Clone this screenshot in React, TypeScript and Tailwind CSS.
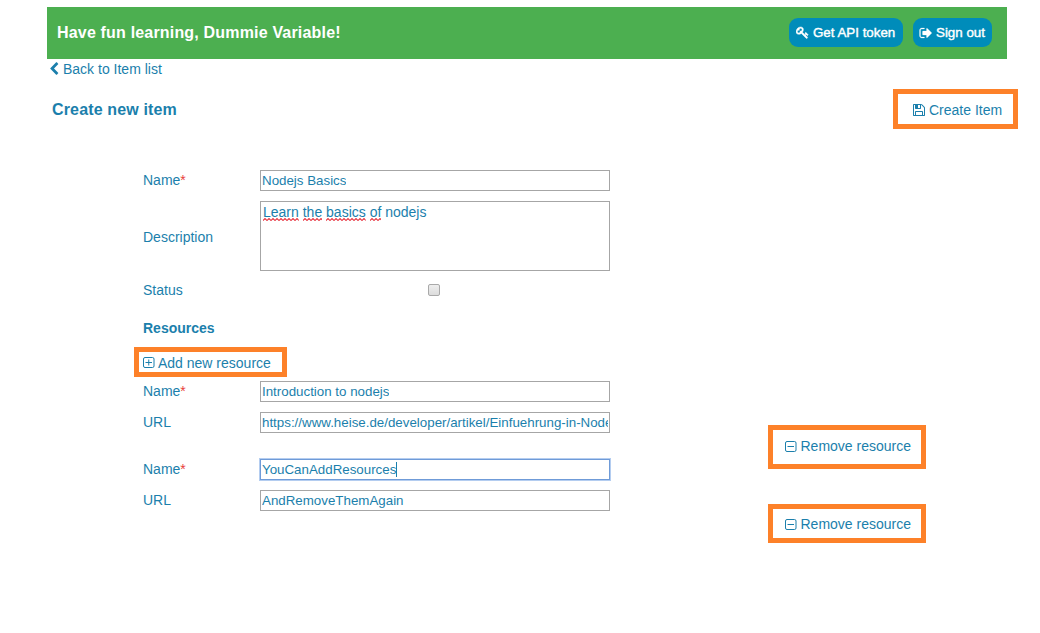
import type { ReactNode } from "react";

const ICONS = {
  key: "M832 512q0-80-56-136t-136-56-136 56-56 136q0 42 19 83-41-19-83-19-80 0-136 56t-56 136 56 136 136 56 136-56 56-136q0-42-19-83 41 19 83 19 80 0 136-56t56-136zm851 704q0 17-49 66t-66 49q-9 0-28.500-16t-36.500-33-38.500-40-24.500-26l-96 96 220 220q28 28 28 68 0 42-39 81t-81 39q-40 0-68-28l-671-671q-176 131-365 131-163 0-265.500-102.500t-102.500-265.500q0-160 95-313t248-248 313-95q163 0 265.500 102.500t102.500 265.500q0 189-131 365l355 355 96-96q-3-3-26-24.500t-40-38.500-33-36.500-16-28.500q0-17 49-66t66-49q13 0 23 10 6 6 46 44.500t82 79.500 86.500 86 73 78 28.500 41z",
  signOut:
    "M704 1440q0 4 1 20t.5 26.500-3 23.500-10 19.500-20.500 6.500h-320q-119 0-203.500-84.500t-84.500-203.500v-704q0-119 84.500-203.500t203.500-84.500h320q13 0 22.500 9.500t9.500 22.500q0 4 1 20t.5 26.500-3 23.500-10 19.500-20.500 6.500h-320q-66 0-113 47t-47 113v704q0 66 47 113t113 47h312l11.500 1 11.500 3 8 5.500 7 9 2 13.500zm928-544q0 26-19 45l-544 544q-19 19-45 19t-45-19-19-45v-288h-448q-26 0-45-19t-19-45v-384q0-26 19-45t45-19h448v-288q0-26 19-45t45-19 45 19l544 544q19 19 19 45z",
  save: "M512 1536h768v-384h-768v384zm896 0h128v-896q0-14-10-38.500t-20-34.500l-281-281q-10-10-34-20t-39-10v416q0 40-28 68t-68 28h-576q-40 0-68-28t-28-68v-416h-128v1280h128v-416q0-40 28-68t68-28h832q40 0 68 28t28 68v416zm-384-928v-320q0-13-9.500-22.500t-22.500-9.500h-192q-13 0-22.500 9.500t-9.500 22.500v320q0 13 9.500 22.500t22.500 9.500h192q13 0 22.500-9.500t9.500-22.500zm640 32v928q0 40-28 68t-68 28h-1344q-40 0-68-28t-28-68v-1344q0-40 28-68t68-28h928q40 0 88 20t76 48l280 280q28 28 48 76t20 88z",
  chevronLeft:
    "M1427 301l-531 531 531 531q19 19 19 45t-19 45l-166 166q-19 19-45 19t-45-19l-742-742q-19-19-19-45t19-45l742-742q19-19 45-19t45 19l166 166q19 19 19 45t-19 45z",
};

function Icon({ name, className }: { name: keyof typeof ICONS; className: string }) {
  return (
    <svg viewBox="0 0 1792 1792" fill="currentColor" className={`shrink-0 ${className}`}>
      <path d={ICONS[name]} />
    </svg>
  );
}

function SquareIcon({ plus = false }: { plus?: boolean }) {
  return (
    <svg viewBox="0 0 12 11" fill="none" stroke="currentColor" className="h-[11px] w-[12px] shrink-0">
      <rect x="0.5" y="0.5" width="10.500" height="10" rx="1.5" />
      <path d={plus ? "M2.5 5.500h6.500M5.750 2.500v6" : "M2.500 5.500h6.500"} />
    </svg>
  );
}

function Label({ children, required }: { children: ReactNode; required?: boolean }) {
  return (
    <label className="w-[117px] shrink-0">
      {children}
      {required && <span className="text-[#e8403a]">*</span>}
    </label>
  );
}

function Field({ label, value, required, focused }: { label: string; value: string; required?: boolean; focused?: boolean }) {
  return (
    <div className="flex h-[21px] items-start leading-[21px]">
      <Label required={required}>{label}</Label>
      <div
        className={`flex h-[21px] w-[350px] items-center border px-px text-[13.33px] leading-[19px] ${
          focused ? "border-[#6f9bd8] shadow-[0_0_0_1px_#b4cdf0]" : "border-[#a6a6a6]"
        }`}
      >
        <span className="overflow-hidden whitespace-nowrap">{value}</span>
        {focused && <span className="h-[15px] w-px bg-[#1b7fac]" />}
      </div>
    </div>
  );
}

function Misspelled({ children }: { children: ReactNode }) {
  return (
    <span className="relative inline-block">
      {children}
      <svg className="absolute top-[14px] left-0 h-[3px] w-full" fill="none" stroke="#e83a45" strokeWidth="1.1">
        <defs>
          <pattern id="squiggle" width="4" height="3" patternUnits="userSpaceOnUse">
            <path d="M-1 1.500L0 2.500L2 0.500L4 2.500L5 1.500" />
          </pattern>
        </defs>
        <rect width="100%" height="3" fill="url(#squiggle)" stroke="none" />
      </svg>
    </span>
  );
}

function Remove({ className }: { className: string }) {
  return (
    <button className={`flex w-[158px] items-start gap-[3.500px] border-5 border-[#fd8129] pl-[12px] leading-4 ${className}`}>
      <span className="flex h-4 items-center">
        <SquareIcon />
      </span>
      Remove resource
    </button>
  );
}

export default function App() {
  return (
    <div className="h-[633px] w-[1040px] overflow-hidden bg-white pt-[7px] pl-[47px] font-['Liberation_Sans',Arial,sans-serif] text-[14px] leading-4 whitespace-nowrap text-[#1b7fac]">
      <header className="flex h-[52px] w-[960px] items-center bg-[#4caf50] pr-[15px] pl-[10px] text-white">
        <h1 className="flex-1 text-[16px] font-bold tracking-[0.18px]">Have fun learning, Dummie Variable!</h1>
        <div className="flex gap-[10px] pb-px text-[13.33px] [-webkit-text-stroke:0.4px_white]">
          <button className="flex h-[29px] w-[114px] items-center gap-[4px] rounded-[9px] bg-[#008cba] pl-[7px]">
            <Icon name="key" className="size-[13px] stroke-white stroke-[60]" />
            Get API token
          </button>
          <button className="flex h-[29px] w-[79px] items-center gap-[3px] rounded-[9px] bg-[#008cba] pl-[6px]">
            <Icon name="signOut" className="size-[14px] stroke-white stroke-[30]" />
            Sign out
          </button>
        </div>
      </header>

      <a className="mt-[2px] flex h-4 items-center">
        <Icon name="chevronLeft" className="mr-[2px] size-[14px]" />
        Back to Item list
      </a>

      <div className="mt-3 flex h-10 w-[971px] items-center justify-between pl-[5px]">
        <h2 className="pt-[2px] text-[16px] font-bold tracking-[0.15px]">Create new item</h2>
        <button className="flex h-10 w-[125px] items-center gap-[3px] border-5 border-[#fd8129] pt-[2px] pl-[14px]">
          <Icon name="save" className="size-[14px]" />
          Create Item
        </button>
      </div>

      <main className="mt-[41px] flex pl-[96px]">
        <form className="flex w-[467px] flex-col">
          <Field label="Name" value="Nodejs Basics" required />
          <div className="mt-[10px] flex h-[70px] items-center">
            <span className="pt-[2px]">
              <Label>Description</Label>
            </span>
            <div className="ml-auto h-[70px] w-[350px] border border-[#a6a6a6] px-[2px] pt-[2px]">
              <Misspelled>Learn</Misspelled> <Misspelled>the</Misspelled> <Misspelled>basics</Misspelled>{" "}
              <Misspelled>of</Misspelled> nodejs
            </div>
          </div>
          <div className="mt-[11px] flex h-4 items-center">
            <Label>Status</Label>
            <div className="flex w-[348px] justify-center">
              <span className="size-[12px] rounded-[2px] border border-[#a9a9a9] bg-linear-to-b from-[#eeeeee] to-[#dcdcdc]" />
            </div>
          </div>
          <h3 className="mt-[22px] font-bold">Resources</h3>
          <button type="button" className="mt-[11px] -ml-[9px] flex h-[30px] w-[153px] items-center gap-[3px] border-5 border-[#fd8129] pt-px pl-[4px]">
            <SquareIcon plus />
            Add new resource
          </button>
          <div className="mt-1 flex flex-col gap-[10px]">
            <Field label="Name" value="Introduction to nodejs" required />
            <Field label="URL" value="https://www.heise.de/developer/artikel/Einfuehrung-in-Node-js" />
          </div>
          <div className="mt-[26px] flex flex-col gap-[10px]">
            <Field label="Name" value="YouCanAddResources" required focused />
            <Field label="URL" value="AndRemoveThemAgain" />
          </div>
        </form>
        <div className="ml-[158px] flex flex-col gap-[35px] pt-[255px]">
          <Remove className="h-[44px] pt-[8px]" />
          <Remove className="h-[39px] pt-[7px]" />
        </div>
      </main>
    </div>
  );
}
